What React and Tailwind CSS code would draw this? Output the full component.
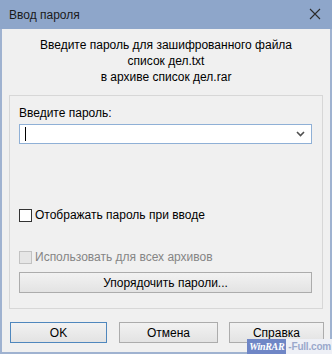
import React from "react";

const font = { fontFamily: '"Liberation Sans", Arial, sans-serif' };

function WinButton({ children, primary, className = "" }) {
  return (
    <button
      className={
        "h-[21px] flex items-center justify-center text-[12px] text-black bg-gradient-to-b from-[#f2f2f2] to-[#e3e3e3] border " +
        (primary ? "border-[#4f87bd] " : "border-[#acacac] ") +
        className
      }
    >
      {children}
    </button>
  );
}

export default function App() {
  return (
    <div className="relative w-[332px] h-[354px] flex flex-col bg-[#f0f0f0] text-black select-none" style={font}>
      {/* title bar */}
      <div className="h-[29px] flex items-center justify-between bg-[#8ea6ca] pl-[9px] pr-[11px]">
        <span className="text-[12px] text-[#1a1a1a]">Ввод пароля</span>
        <svg width="12" height="12" viewBox="0 0 12 12" className="mt-[-2px]">
          <path d="M1 1L11 11M11 1L1 11" stroke="#2b2b2b" strokeWidth="1.1" />
        </svg>
      </div>

      <div className="flex-1 flex flex-col border-x-[2px] border-b-[2px] border-[#9fb2d0]">
        <div className="pt-[8px] text-center text-[12px] leading-[16px]">
          <div>Введите пароль для зашифрованного файла</div>
          <div>список дел.txt</div>
          <div>в архиве список дел.rar</div>
        </div>

        <div className="mt-[10px] mx-[7px] border border-[#d7d7d7] pl-[9px] pr-[10px] pt-[9px] pb-[15px]">
          <div className="text-[12px] leading-[16px]">Введите пароль:</div>
          <div className="mt-[3px] h-[20px] bg-white border border-[#8fb0d6] flex items-center justify-between pl-[5px] pr-[6px]">
            <div className="w-[1px] h-[14px] bg-black" />
            <svg width="9" height="6" viewBox="0 0 9 6">
              <path d="M1 1L4.5 4.5L8 1" fill="none" stroke="#505050" strokeWidth="1.6" />
            </svg>
          </div>

          <div className="mt-[63px] flex items-center h-[16px] gap-[3px]">
            <div className="w-[13px] h-[13px] bg-white border border-[#333333]" />
            <span className="text-[12px]">Отображать пароль при вводе</span>
          </div>

          <div className="mt-[26px] flex items-center h-[16px] gap-[3px]">
            <div className="w-[13px] h-[13px] bg-[#e6e6e6] border border-[#c2c2c2]" />
            <span className="text-[12px] text-[#858585]">Использовать для всех архивов</span>
          </div>

          <WinButton className="mt-[7px] w-full">Упорядочить пароли...</WinButton>
        </div>

        <div className="mt-[13px] ml-[8px] flex">
          <WinButton primary className="w-[97px]">OK</WinButton>
          <WinButton className="w-[99px] ml-[12px]">Отмена</WinButton>
          <WinButton className="w-[95px] ml-[11px]">Справка</WinButton>
        </div>
      </div>

      {/* watermark */}
      <div className="absolute right-0 bottom-0 h-[15px] flex items-stretch font-bold leading-[15px] whitespace-nowrap">
        <span
          className="bg-[#6f86c6] text-white italic text-[10px] px-[2px] tracking-[-0.3px]"
          style={{ fontFamily: '"Liberation Serif", serif' }}
        >
          WinRAR
        </span>
        <span className="bg-[#eef0f6] text-[#9aa8cc] text-[10px] pl-[2px] pr-[1px] tracking-[-0.2px]">
          -Full.com
        </span>
      </div>
    </div>
  );
}
